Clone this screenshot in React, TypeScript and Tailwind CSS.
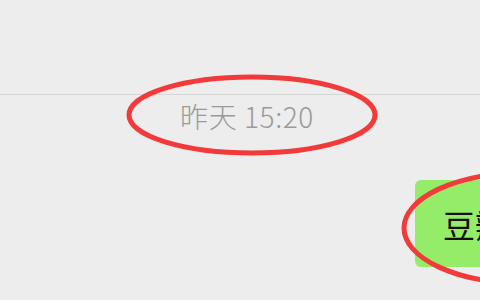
export default function App() {
  return (
    <div
      className="relative w-[480px] h-[300px] overflow-hidden bg-[#ededed]"
      style={{ fontFamily: '"Noto Sans CJK SC", "Noto Sans", sans-serif' }}
    >
      <div className="h-[95px] border-b border-[#d6d6d6]" />
      <div className="flex justify-center pl-[14px] pt-[4px]">
        <span className="text-[28px] leading-[34px] font-light tracking-[0.6px] text-[#9a9a9a] whitespace-nowrap">昨天 15:20</span>
      </div>
      <div className="flex mt-[47px] pl-[415px]">
        <div className="shrink-0 h-[87px] w-[65px] overflow-hidden rounded-l-[6px] bg-[#95ec69] pl-[28px] flex items-center">
          <span className="text-[32px] leading-none text-[#111] whitespace-nowrap">豆瓣</span>
        </div>
      </div>
      <svg className="absolute inset-0 pointer-events-none" width="480" height="300" viewBox="0 0 480 300">
        <ellipse cx="252" cy="115" rx="123" ry="38" fill="none" stroke="#f23a3a" strokeWidth="5" />
        <ellipse cx="522" cy="228" rx="118" ry="55" fill="none" stroke="#f23a3a" strokeWidth="5" />
      </svg>
    </div>
  );
}
